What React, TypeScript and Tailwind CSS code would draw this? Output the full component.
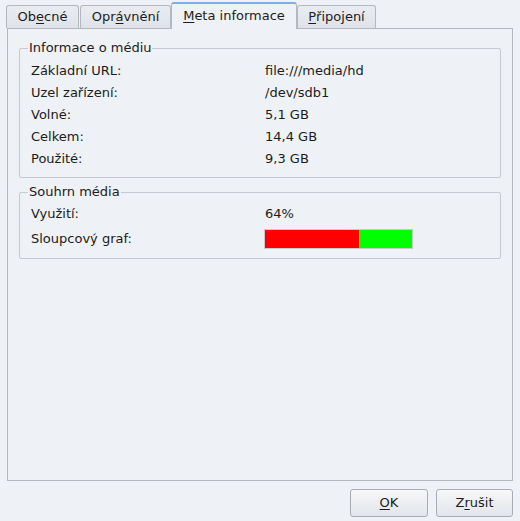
import React from 'react';

const font = { fontFamily: '"DejaVu Sans", Verdana, sans-serif' };

type TabProps = { label: string; mn: number; w: string; active?: boolean };

// label with one underlined mnemonic letter
const Mnemonic = ({ label, mn }: { label: string; mn: number }) => (
  <>
    {label.slice(0, mn)}
    <span className="underline underline-offset-2">{label[mn]}</span>
    {label.slice(mn + 1)}
  </>
);

const Tab = ({ label, mn, w, active }: TabProps) =>
  active ? (
    <div
      className={`relative z-10 ${w} h-[27px] -mb-px flex items-center justify-center rounded-t-[3px] border border-b-0 border-[#b4b8be] border-t-2 border-t-[#7eaee2] bg-[#eef1f5] pb-[2px]`}
    >
      <Mnemonic label={label} mn={mn} />
    </div>
  ) : (
    <div
      className={`${w} h-[23px] flex items-center justify-center rounded-t-[3px] border border-b-0 border-[#b4b8be] bg-gradient-to-b from-[#e9ecf1] to-[#dfe3e9]`}
    >
      <Mnemonic label={label} mn={mn} />
    </div>
  );

const Row = ({ label, children, h = 'h-[22px]' }: { label: string; children: React.ReactNode; h?: string }) => (
  <div className={`grid grid-cols-[234px_1fr] items-center ${h}`}>
    <span>{label}</span>
    <div>{children}</div>
  </div>
);

const Group = ({ title, children, pt, pb }: { title: string; children: React.ReactNode; pt: string; pb: string }) => (
  <fieldset className={`border border-[#c6cad0] rounded-[2px] px-[8px] ${pb}`}>
    <legend className="px-[1px] leading-[16px]">{title}</legend>
    <div className={`${pt} pl-[3px]`}>{children}</div>
  </fieldset>
);

export default function App() {
  return (
    <div
      className="w-[520px] h-[521px] bg-[#eef1f5] text-[13px] text-[#1c1c1c] px-[7px] pt-[2px] flex flex-col"
      style={font}
    >
      <div className="flex items-end h-[26px] -ml-px">
        <Tab label="Obecné" mn={2} w="w-[73px]" />
        <div className="w-px" />
        <Tab label="Oprávnění" mn={3} w="w-[91px]" />
        <Tab label="Meta informace" mn={0} w="w-[126px]" active />
        <Tab label="Připojení" mn={0} w="w-[79px]" />
      </div>

      <div className="h-[453px] border border-[#b4b8be] bg-[#eef1f5] px-[11px] pt-[11px] flex flex-col gap-[6px]">
        <Group title="Informace o médiu" pt="pt-[4px]" pb="pb-[7px]">
          <Row label="Základní URL:">file:///media/hd</Row>
          <Row label="Uzel zařízení:">/dev/sdb1</Row>
          <Row label="Volné:">5,1 GB</Row>
          <Row label="Celkem:">14,4 GB</Row>
          <Row label="Použité:">9,3 GB</Row>
        </Group>

        <Group title="Souhrn média" pt="pt-[3px]" pb="pb-[5px]">
          <Row label="Využití:">64%</Row>
          <Row label="Sloupcový graf:" h="h-[28px]">
            <div className="flex w-[149px] h-[20px] ml-[-1px] border border-[#c9c9c9]">
              <div className="bg-[#ff0000]" style={{ width: '64%' }} />
              <div className="flex-1 bg-[#00ff00]" />
            </div>
          </Row>
        </Group>
      </div>

      <div className="flex justify-end gap-[8px] mt-[8px]">
        <button className="w-[78px] h-[28px] rounded-[3px] border border-[#a9adb3] bg-gradient-to-b from-[#f6f7f9] to-[#e2e5ea]">
          <Mnemonic label="OK" mn={0} />
        </button>
        <button className="w-[77px] h-[28px] rounded-[3px] border border-[#a9adb3] bg-gradient-to-b from-[#f6f7f9] to-[#e2e5ea]">
          <Mnemonic label="Zrušit" mn={1} />
        </button>
      </div>
    </div>
  );
}
